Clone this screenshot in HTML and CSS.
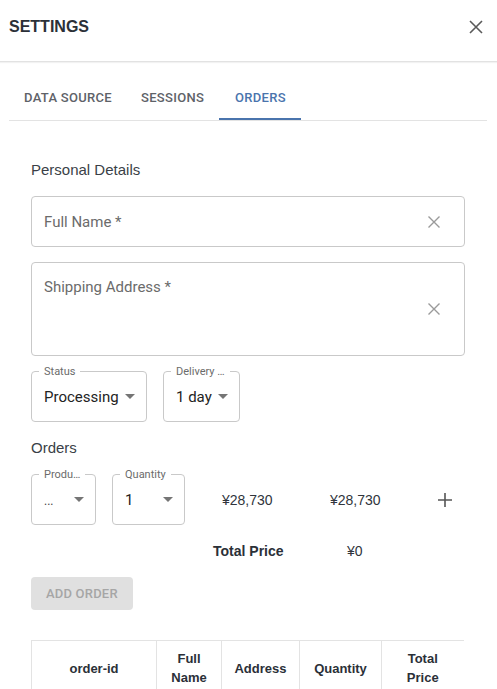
FILE: index.html
```html
<!DOCTYPE html>
<html lang="en">
<head>
<meta charset="utf-8">
<title>Settings</title>
<link rel="stylesheet" href="styles.css">
</head>
<body>
<div class="dialog">
  <header class="header">
    <h1 class="title">SETTINGS</h1>
    <button class="close" aria-label="Close">
      <svg viewBox="0 0 14 14" width="14" height="14"><path d="M1 1L13 13M13 1L1 13" stroke="#5a5a5a" stroke-width="1.6" fill="none"/></svg>
    </button>
  </header>

  <div class="panel">
    <nav class="tabs">
      <div class="tab">DATA SOURCE</div>
      <div class="tab">SESSIONS</div>
      <div class="tab active">ORDERS</div>
    </nav>

    <section class="form">
      <h2 class="section-title">Personal Details</h2>

      <div class="input">
        <span class="placeholder">Full Name *</span>
        <svg class="clear" viewBox="0 0 12 12" width="12" height="12"><path d="M0.5 0.5L11.5 11.5M11.5 0.5L0.5 11.5" stroke="#9a9a9a" stroke-width="1.4" fill="none"/></svg>
      </div>

      <div class="input tall">
        <span class="placeholder">Shipping Address *</span>
        <svg class="clear" viewBox="0 0 12 12" width="12" height="12"><path d="M0.5 0.5L11.5 11.5M11.5 0.5L0.5 11.5" stroke="#9a9a9a" stroke-width="1.4" fill="none"/></svg>
      </div>

      <div class="select-row">
        <div class="select w-status">
          <span class="legend">Status</span>
          <span class="value">Processing</span>
          <svg class="arrow" viewBox="0 0 10 5" width="10" height="5"><path d="M0 0L5 5L10 0Z" fill="#757575"/></svg>
        </div>
        <div class="select w-delivery">
          <span class="legend">Delivery …</span>
          <span class="value">1 day</span>
          <svg class="arrow" viewBox="0 0 10 5" width="10" height="5"><path d="M0 0L5 5L10 0Z" fill="#757575"/></svg>
        </div>
      </div>

      <h2 class="section-title orders-title">Orders</h2>

      <div class="order-row">
        <div class="select w-product">
          <span class="legend">Produ…</span>
          <span class="value dots">...</span>
          <svg class="arrow" viewBox="0 0 10 5" width="10" height="5"><path d="M0 0L5 5L10 0Z" fill="#757575"/></svg>
        </div>
        <div class="select w-qty">
          <span class="legend">Quantity</span>
          <span class="value">1</span>
          <svg class="arrow" viewBox="0 0 10 5" width="10" height="5"><path d="M0 0L5 5L10 0Z" fill="#757575"/></svg>
        </div>
        <span class="price first">¥28,730</span>
        <span class="price">¥28,730</span>
        <svg class="plus" viewBox="0 0 14 14" width="14" height="14"><path d="M7 0V14M0 7H14" stroke="#555" stroke-width="1.6" fill="none"/></svg>
      </div>

      <div class="total-row">
        <span class="total-label">Total Price</span>
        <span class="total-value">¥0</span>
      </div>

      <button class="add-btn" disabled>ADD ORDER</button>

      <table class="orders-table">
        <colgroup>
          <col class="c1">
          <col class="c2">
          <col class="c3">
          <col class="c4">
          <col class="c5">
        </colgroup>
        <thead>
          <tr>
            <th>order-id</th>
            <th>Full<br>Name</th>
            <th>Address</th>
            <th>Quantity</th>
            <th>Total<br>Price</th>
          </tr>
        </thead>
      </table>
    </section>
  </div>
</div>
</body>
</html>
```

FILE: styles.css
```css
html, body {
  margin: 0;
  padding: 0;
  background: #fff;
  overflow: hidden;
  height: 689px;
}

body {
  font-family: "Liberation Sans", Arial, sans-serif;
  color: #2e333b;
}

.header {
  height: 61px;
  display: flex;
  align-items: center;
  justify-content: space-between;
  padding: 0 14px 0 9px;
  border-bottom: 1px solid #e2e2e2;
  box-shadow: 0 1px 1px rgba(0, 0, 0, 0.05);
}

.title {
  margin: 0;
  font-size: 16px;
  font-weight: 700;
  color: #2b3038;
  margin-top: -8px;
}

.close {
  border: 0;
  background: none;
  padding: 0;
  width: 14px;
  height: 14px;
  display: flex;
  margin-top: -7px;
}

.panel {
  margin: 10px 10px 0 9px;
}

.tabs {
  display: flex;
  border-bottom: 1px solid #e3e3e3;
  height: 48px;
}

.tab {
  font-family: Roboto, sans-serif;
  font-weight: 500;
  font-size: 13px;
  letter-spacing: 0.3px;
  color: #5e6268;
  padding: 4px 15px 0 15px;
  display: flex;
  align-items: center;
  box-sizing: border-box;
  height: 48px;
  border-bottom: 2px solid transparent;
}

.tab:first-child {
  padding-right: 14px;
}

.tab.active {
  color: #4a74ad;
  border-bottom-color: #4a74ad;
  padding-left: 16px;
}

.form {
  padding: 39px 22px 0 22px;
}

.section-title {
  margin: 0;
  font-size: 15px;
  font-weight: 400;
  line-height: 20px;
  color: #3a3f47;
}

.input {
  margin-top: 16px;
  height: 51px;
  border: 1px solid #c9c9c9;
  border-radius: 4px;
  box-sizing: border-box;
  display: flex;
  align-items: center;
  justify-content: space-between;
  padding: 0 24px 0 12px;
}

.input + .input {
  margin-top: 15px;
}

.placeholder {
  font-family: Roboto, sans-serif;
  font-size: 15px;
  line-height: 20px;
  color: #6b6b6b;
}

.input.tall {
  height: 94px;
  align-items: flex-start;
  padding-top: 14px;
}

.input.tall .clear {
  align-self: center;
  margin-top: -14px;
}

.select-row {
  display: flex;
  gap: 16px;
  margin-top: 15px;
}

.select {
  position: relative;
  height: 51px;
  box-sizing: border-box;
  border: 1px solid #c9c9c9;
  border-radius: 4px;
  display: flex;
  align-items: center;
  justify-content: space-between;
  padding: 0 11px 0 12px;
  font-family: Roboto, sans-serif;
  white-space: nowrap;
  flex-shrink: 0;
}

.arrow {
  flex-shrink: 0;
}

.legend {
  position: absolute;
  top: -7px;
  left: 7px;
  padding: 0 5px;
  background: #fff;
  font-size: 11px;
  line-height: 13px;
  color: #6b6b6b;
  white-space: nowrap;
}

.value {
  font-size: 15px;
  line-height: 20px;
  color: #232323;
}

.dots {
  font-size: 12px;
  color: #444;
  margin-top: 2px;
}

.w-status { width: 116px; }
.w-delivery { width: 77px; }
.w-product { width: 65px; }
.w-qty { width: 73px; }

.orders-title {
  margin-top: 16px;
}

.order-row {
  display: flex;
  align-items: center;
  gap: 16px;
  margin-top: 16px;
}

.price {
  font-size: 14px;
  line-height: 20px;
  color: #30353c;
  width: 92px;
}

.price.first {
  margin-left: 21px;
}

.total-row {
  display: flex;
  margin-top: 16px;
  padding-left: 182px;
  line-height: 20px;
}

.total-label {
  font-size: 14px;
  font-weight: 700;
  width: 134px;
  color: #2b3038;
}

.total-value {
  font-size: 14px;
  color: #30353c;
}

.add-btn {
  display: block;
  margin-top: 16px;
  height: 33px;
  padding: 0 15px;
  border: 0;
  border-radius: 4px;
  background: #e0e0e0;
  color: #a6a6a6;
  font-family: Roboto, sans-serif;
  font-weight: 500;
  font-size: 13px;
  letter-spacing: 0.2px;
}

.orders-table {
  margin-top: 30px;
  width: 432px;
  border-collapse: collapse;
  table-layout: fixed;
}

.orders-table th {
  border-top: 1px solid #e3e3e3;
  border-left: 1px solid #e3e3e3;
  font-size: 13px;
  font-weight: 700;
  line-height: 19px;
  color: #2b3038;
  padding: 8px 4px 9px;
  text-align: center;
  vertical-align: middle;
}

.c1 { width: 125px; }
.c2 { width: 65px; }
.c3 { width: 78px; }
.c4 { width: 82px; }
.c5 { width: 82px; }
```
